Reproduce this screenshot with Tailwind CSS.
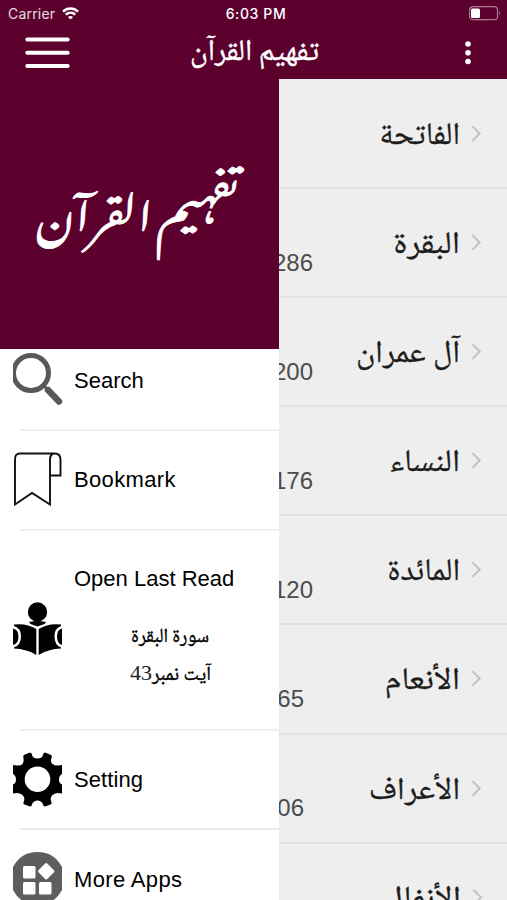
<!DOCTYPE html>
<html lang="ur">
<head>
  <meta charset="UTF-8">
  <meta name="viewport" content="width=device-width, initial-scale=1.0">
  <title>تفہیم القرآن</title>
  <script src="https://cdn.jsdelivr.net/npm/@tailwindcss/browser@4"></script>
</head>
<body class="h-[900px] w-[507px] overflow-hidden bg-[#eeeeee] font-['Liberation_Sans',Arial,sans-serif]">
  <!-- Header -->
  <header class="h-[79px] bg-[#5c002e] text-white">
    <div class="grid h-[27px] grid-cols-3 items-center pr-1.5 pl-2">
      <div class="flex items-center gap-[7px] font-[Inter,sans-serif] text-[14px] tracking-[0.2px] text-white/85">
        <span>Carrier</span>
        <svg class="h-[13px] w-[17px]" viewBox="0 0 17 13" fill="none" stroke="#fff" stroke-width="2.5">
          <path d="M1 4.6C5.2.6 11.8.6 16 4.6"/>
          <path d="M3.8 7.6C6.5 5 10.5 5 13.2 7.6"/>
          <path d="M8.5 12.6L5.9 10Q8.5 7.8 11.1 10Z" fill="#fff" stroke="none"/>
        </svg>
      </div>
      <div class="pl-[3px] text-center font-[Inter,sans-serif] text-[14px] font-medium tracking-[0.6px] whitespace-nowrap">6:03 PM</div>
      <svg class="h-[15px] w-[32px] justify-self-end" viewBox="0 0 32 15">
        <rect x=".5" y=".7" width="28" height="13" rx="3.5" fill="none" stroke="#a77a91" stroke-width="1.2"/>
        <rect x="2" y="2.5" width="9" height="9.5" rx="1.5" fill="#fff"/>
        <path d="M30 5Q32 7.2 30 9.4Z" fill="#a77a91"/>
      </svg>
    </div>
    <div class="flex h-[52px] items-center">
      <svg class="ml-[25px] h-8 w-[45px]" viewBox="0 0 45 32" stroke="#fff" stroke-width="4" stroke-linecap="round">
        <path d="M2.3 2.5H42.7M2.3 15.8H42.7M2.3 29H42.7"/>
      </svg>
      <svg class="ml-[93px] h-[52px] w-[160px]" viewBox="0 0 160 52">
        <text x="156" y="33" direction="rtl" textLength="129" lengthAdjust="spacingAndGlyphs" fill="#fff" stroke="#fff" stroke-width=".4" class="font-['Noto_Naskh_Arabic','DejaVu_Sans',sans-serif] text-[30px]">تفهيم القرآن</text>
      </svg>
      <svg class="mr-[36px] ml-auto h-[24px] w-[6px]" viewBox="0 0 6 24" fill="#fff">
        <circle cx="3" cy="3" r="2.8"/><circle cx="3" cy="11.8" r="2.8"/><circle cx="3" cy="20.5" r="2.8"/>
      </svg>
    </div>
  </header>

  <main class="relative h-[821px] overflow-hidden">
    <!-- Surah list -->
    <ul class="pt-px pl-[264px] text-[#4c4c4c]">
      <li class="flex h-[109.1px] items-center justify-end border-b-2 border-[#e0e1e1] pr-6">
        <svg class="h-full w-[150px]" viewBox="0 0 150 109"><text x="128" y="65" direction="rtl" textLength="82" lengthAdjust="spacingAndGlyphs" fill="#1c1c1c" stroke="#1c1c1c" stroke-width=".3" class="font-['Noto_Naskh_Arabic','DejaVu_Sans',sans-serif] text-[32px]">الفاتحة</text>
          <path d="M140.5 47l7.500 7.500-7.500 7.500" fill="none" stroke="#c2c2c4" stroke-width="2"/></svg>
      </li>
      <li class="flex h-[109.1px] items-center justify-between border-b-2 border-[#e0e1e1] pr-6 pl-[9px]">
        <span class="pt-10 text-2xl">286</span>
        <svg class="h-full w-[150px]" viewBox="0 0 150 109"><text x="128" y="65" direction="rtl" textLength="68" lengthAdjust="spacingAndGlyphs" fill="#1c1c1c" stroke="#1c1c1c" stroke-width=".3" class="font-['Noto_Naskh_Arabic','DejaVu_Sans',sans-serif] text-[32px]">البقرة</text>
          <path d="M140.5 47l7.500 7.500-7.500 7.500" fill="none" stroke="#c2c2c4" stroke-width="2"/></svg>
      </li>
      <li class="flex h-[109.1px] items-center justify-between border-b-2 border-[#e0e1e1] pr-6 pl-[9px]">
        <span class="pt-10 text-2xl">200</span>
        <svg class="h-full w-[150px]" viewBox="0 0 150 109"><text x="128" y="65" direction="rtl" textLength="106" lengthAdjust="spacingAndGlyphs" fill="#1c1c1c" stroke="#1c1c1c" stroke-width=".3" class="font-['Noto_Naskh_Arabic','DejaVu_Sans',sans-serif] text-[32px]">آل عمران</text>
          <path d="M140.5 47l7.500 7.500-7.500 7.500" fill="none" stroke="#c2c2c4" stroke-width="2"/></svg>
      </li>
      <li class="flex h-[109.1px] items-center justify-between border-b-2 border-[#e0e1e1] pr-6 pl-[9px]">
        <span class="pt-10 text-2xl">176</span>
        <svg class="h-full w-[150px]" viewBox="0 0 150 109"><text x="128" y="65" direction="rtl" textLength="72" lengthAdjust="spacingAndGlyphs" fill="#1c1c1c" stroke="#1c1c1c" stroke-width=".3" class="font-['Noto_Naskh_Arabic','DejaVu_Sans',sans-serif] text-[32px]">النساء</text>
          <path d="M140.5 47l7.500 7.500-7.500 7.500" fill="none" stroke="#c2c2c4" stroke-width="2"/></svg>
      </li>
      <li class="flex h-[109.1px] items-center justify-between border-b-2 border-[#e0e1e1] pr-6 pl-[9px]">
        <span class="pt-10 text-2xl">120</span>
        <svg class="h-full w-[150px]" viewBox="0 0 150 109"><text x="128" y="65" direction="rtl" textLength="74" lengthAdjust="spacingAndGlyphs" fill="#1c1c1c" stroke="#1c1c1c" stroke-width=".3" class="font-['Noto_Naskh_Arabic','DejaVu_Sans',sans-serif] text-[32px]">المائدة</text>
          <path d="M140.5 47l7.500 7.500-7.500 7.500" fill="none" stroke="#c2c2c4" stroke-width="2"/></svg>
      </li>
      <li class="flex h-[109.1px] items-center justify-between border-b-2 border-[#e0e1e1] pr-6">
        <span class="pt-10 text-2xl">165</span>
        <svg class="h-full w-[150px]" viewBox="0 0 150 109"><text x="128" y="65" direction="rtl" textLength="77" lengthAdjust="spacingAndGlyphs" fill="#1c1c1c" stroke="#1c1c1c" stroke-width=".3" class="font-['Noto_Naskh_Arabic','DejaVu_Sans',sans-serif] text-[32px]">الأنعام</text>
          <path d="M140.5 47l7.500 7.500-7.500 7.500" fill="none" stroke="#c2c2c4" stroke-width="2"/></svg>
      </li>
      <li class="flex h-[109.1px] items-center justify-between border-b-2 border-[#e0e1e1] pr-6">
        <span class="pt-10 text-2xl">206</span>
        <svg class="h-full w-[150px]" viewBox="0 0 150 109"><text x="128" y="65" direction="rtl" textLength="93" lengthAdjust="spacingAndGlyphs" fill="#1c1c1c" stroke="#1c1c1c" stroke-width=".3" class="font-['Noto_Naskh_Arabic','DejaVu_Sans',sans-serif] text-[32px]">الأعراف</text>
          <path d="M140.5 47l7.500 7.500-7.500 7.500" fill="none" stroke="#c2c2c4" stroke-width="2"/></svg>
      </li>
      <li class="flex h-[109.1px] items-center justify-end pr-6">
        <svg class="h-full w-[150px]" viewBox="0 0 150 109"><text x="128" y="64" direction="rtl" textLength="78" lengthAdjust="spacingAndGlyphs" fill="#1c1c1c" stroke="#1c1c1c" stroke-width=".3" class="font-['Noto_Naskh_Arabic','DejaVu_Sans',sans-serif] text-[32px]">الأنفال</text>
          <path d="M140.5 46l7.500 7.500-7.500 7.500" fill="none" stroke="#c2c2c4" stroke-width="2"/></svg>
      </li>
    </ul>

    <!-- Side menu, slides over the list -->
    <aside class="absolute inset-y-0 left-0 w-[279px] overflow-hidden bg-white text-[22px] text-black">
      <div class="h-[270px] bg-[#5c002e]">
        <svg class="h-full w-full" viewBox="0 0 279 270" fill="#fff">
          <g class="font-['Noto_Nastaliq_Urdu','Noto_Naskh_Arabic','DejaVu_Sans',sans-serif] text-[40px]" stroke="#fff" stroke-width=".8">
            <text direction="rtl" textLength="84" lengthAdjust="spacingAndGlyphs" transform="translate(240 157)">تفہیم</text>
            <text direction="rtl" textLength="117" lengthAdjust="spacingAndGlyphs" transform="translate(153 156)">القرآن</text>
          </g>
        </svg>
      </div>
      <nav>
        <a class="flex h-[80px] items-start pl-[13px]">
          <svg class="mt-1 h-[55px] w-[50px]" viewBox="0 0 50 55" fill="none" stroke="#595959">
            <circle cx="18" cy="20" r="17.500" stroke-width="5"/>
            <path d="M35 37L46 48.500" stroke-width="6.500" stroke-linecap="round"/>
            <path d="M30 32L35 37" stroke-width="3"/>
          </svg>
          <span class="pt-[15px] pl-[11px]">Search</span>
        </a>
        <a class="ml-5 flex h-[99.5px] items-center border-t-2 border-[#efefef]">
          <svg class="-ml-[7px] h-[55px] w-[50px]" viewBox="0 0 50 55" fill="none" stroke="#111" stroke-width="1.9">
            <path d="M42 1.500H7Q2 1.500 2 7.500V52.500L19 41 37 52.500V8Q37 1.500 42 1.500 47.500 1.500 47.500 8V23.500H37"/>
          </svg>
          <span class="pl-[11px] tracking-[0.35px]">Bookmark</span>
        </a>
        <a class="ml-5 flex h-[200px] border-t-2 border-[#efefef]">
          <svg class="mt-[70px] -ml-[7px] h-[56px] w-[50px]" viewBox="0 0 50 56">
            <circle cx="24.500" cy="11" r="9.700"/>
            <path d="M16 21Q24.500 19 33 21L31.500 23 24.500 25.500 17.500 23Z"/>
            <path d="M1 23.500Q14 22 23.300 28V54Q14 48 1 47.500V46.500Q8 44 8 35.500T1 25Z"/>
            <path d="M48 23.500Q35 22 25.700 28V54Q35 48 48 47.500V46.500Q41.500 44 41.500 35.500T48 25Z"/>
            <path d="M0 27.500Q5.500 28.500 5.500 35.500T0 44ZM49 27.500Q44 28.500 44 35.500T49 44Z"/>
          </svg>
          <div class="pt-[32px] pl-[11px]">
            <p class="leading-8">Open Last Read</p>
            <svg class="mt-2.5 h-[94px] w-[170px]" viewBox="0 0 170 94">
              <g class="font-['Noto_Naskh_Arabic','DejaVu_Sans',sans-serif] text-[20px]" stroke="#000" stroke-width=".4">
                <text x="135" y="37" direction="rtl" textLength="78" lengthAdjust="spacingAndGlyphs">سورة البقرة</text>
                <text x="137" y="75" direction="rtl" textLength="59" lengthAdjust="spacingAndGlyphs">آیت نمبر</text>
              </g>
              <text x="56" y="75" fill="#222" class="font-['Liberation_Serif',serif] text-[22px]">43</text>
            </svg>
          </div>
        </a>
        <a class="ml-5 flex h-[99.5px] items-center border-t-2 border-[#efefef]">
          <svg class="-ml-[7px] h-[55px] w-[50px]" viewBox="0 0 50 55">
            <path fill-rule="evenodd" d="M12 2.500L17 .5Q19 .5 19 3Q20 6.500 24.500 6.500T30 3Q30 .5 32 .5L37 2.500Q39.500 3 38.500 6Q37 10 39.500 12T45 13.500L49 13V22Q46 23.500 46 27.500T49 32.500V41.500L45 41Q41 41 39 43.500T38 49Q39.500 52 37.500 52.500L32 54.500Q30 54.500 30 52Q28 48.500 24.500 48.500T19 52Q19 54.500 17 54.500L11.500 52.500Q9.500 52 11 49Q12 46 10 43.500T4 41L0 41.500V32.500Q3 31.500 3 27.500T0 22V13L4 13.500Q8 14 9.500 12T10.500 6Q9.500 3 12 2.500ZM24.500 14.500A12.800 12.800 0 1 0 24.500 40.100A12.800 12.800 0 1 0 24.500 14.500Z"/>
          </svg>
          <span class="pl-[11px] tracking-[0.1px]">Setting</span>
        </a>
        <a class="ml-5 flex h-[101px] items-center border-t-2 border-[#e8e8e8]">
          <svg class="-ml-[7px] h-[55px] w-[50px]" viewBox="0 0 50 55">
            <path fill="#5f5d5e" d="M0 15Q8 0 24.500 0T49 15V38Q41 53 24.500 53T0 38Z"/>
            <g fill="#fff">
              <rect x="10" y="14" width="12.500" height="12.500" rx="1.500"/>
              <rect x="10" y="30" width="12.500" height="12.500" rx="1.500"/>
              <rect x="26" y="30" width="12.500" height="12.500" rx="1.500"/>
              <rect x="27" y="13" width="12.500" height="12.500" rx="1.500" transform="rotate(45 33.200 19.200)"/>
            </g>
          </svg>
          <span class="pl-[11px] tracking-[0.35px]">More Apps</span>
        </a>
      </nav>
    </aside>
  </main>
</body>
</html>
